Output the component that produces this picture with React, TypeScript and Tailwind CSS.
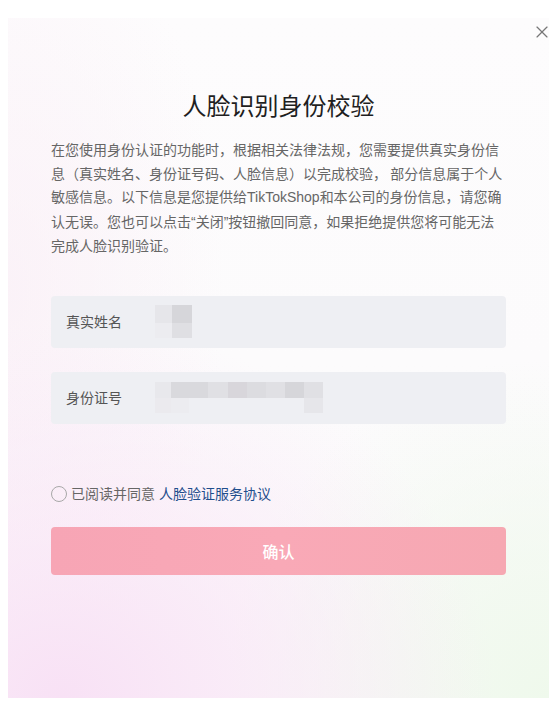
import { X } from 'lucide-react'

// mosaic cells for the masked input values: [width, colour]
const nameRows: [number, string][][] = [
  [[17, '#e6e6ea'], [20, '#d6d6da']],
  [[17, '#ececf0'], [20, '#dfdfe3']],
]

const idRows: [number, string][][] = [
  [
    [16, '#e8e8ec'], [18, '#d9d9dd'], [19, '#d9d9dd'], [20, '#e0e0e4'], [19, '#d8d6db'],
    [19, '#dcdce0'], [19, '#e0e0e4'], [19, '#d6d6da'], [19, '#e0e0e4'],
  ],
  [
    [16, '#ebeaee'], [18, '#ececf0'], [19, '#eeeff3'], [20, '#eeeff3'], [19, '#eeeff3'],
    [19, '#eeeff3'], [19, '#eeeff3'], [19, '#eeeff3'], [19, '#e6e6ea'],
  ],
]

function Mosaic({ rows, heights }: { rows: [number, string][][]; heights: number[] }) {
  return (
    <div className="flex flex-col">
      {rows.map((row, r) => (
        <div key={r} className="flex">
          {row.map(([w, c], i) => (
            <div key={i} style={{ width: w, height: heights[r], background: c }} />
          ))}
        </div>
      ))}
    </div>
  )
}

function Field({ label, children }: { label: string; children: React.ReactNode }) {
  return (
    <div className="flex h-[52px] items-center rounded-[4px] bg-[#eeeff3] pl-[15px]">
      <span className="w-[89px] shrink-0 text-[14px] text-[#555]">{label}</span>
      {children}
    </div>
  )
}

const latin = 'font-["Liberation_Sans",sans-serif]'

export default function App() {
  return (
    <div
      className="min-h-[713px] bg-white pl-[8px] pr-[8px] pt-[18px] pb-[15px]"
      style={{ fontFamily: '"Noto Sans CJK SC", "Noto Sans", sans-serif' }}
    >
      <div className="relative h-[680px] w-[541px] bg-[radial-gradient(ellipse_80%_55%_at_10%_100%,#f8e1f5_0%,rgba(249,228,246,0.6)_45%,rgba(249,228,246,0)_100%),radial-gradient(ellipse_60%_50%_at_100%_100%,#eff9ec_0%,rgba(239,249,236,0.6)_45%,rgba(239,249,236,0)_100%),radial-gradient(ellipse_40%_60%_at_0%_40%,rgba(250,238,246,0.7)_0%,rgba(250,238,246,0)_100%),linear-gradient(#fdfcfd,#fbfafb)] px-[43px] pt-[70px]">
        <button className="absolute right-[-3px] top-[4px] flex h-[20px] w-[20px] items-center justify-center text-[#777]">
          <X size={20} strokeWidth={1.4} />
        </button>

        <h1 className="text-center text-[24px] leading-[34px] font-normal text-[#1f1f1f]">
          人脸识别身份校验
        </h1>

        <p className="mt-[16px] text-[14px] leading-[23.5px] text-[#666]">
          在您使用身份认证的功能时，根据相关法律法规，您需要提供真实身份信息（真实姓名、身份证号码、人脸信息）以完成校验， 部分信息属于个人敏感信息。以下信息是您提供给<span className={latin}>TikTokShop</span>和本公司的身份信息，请您确认无误。您也可以点击<span className={latin}>“</span>关闭<span className={latin}>”</span>按钮撤回同意，如果拒绝提供您将可能无法完成人脸识别验证。
        </p>

        <div className="mt-[38px] flex flex-col gap-[24px]">
          <Field label="真实姓名">
            <Mosaic rows={nameRows} heights={[18, 15]} />
          </Field>
          <Field label="身份证号">
            <Mosaic rows={idRows} heights={[16, 15]} />
          </Field>
        </div>

        <div className="mt-[60px] flex h-[20px] items-center gap-[4px] text-[14px]">
          <span className="h-[16px] w-[16px] rounded-full border-[1.5px] border-[#a8a8a8]" />
          <span className="text-[#666]">已阅读并同意</span>
          <span className="text-[#1f4e8c]">人脸验证服务协议</span>
        </div>

        <button className="mt-[23px] flex h-[48px] w-full items-center justify-center rounded-[4px] bg-[linear-gradient(90deg,#f7a5b5,#f9a9b7_50%,#f6a8b2)] text-[16px] font-medium text-white">
          确认
        </button>
      </div>
    </div>
  )
}
